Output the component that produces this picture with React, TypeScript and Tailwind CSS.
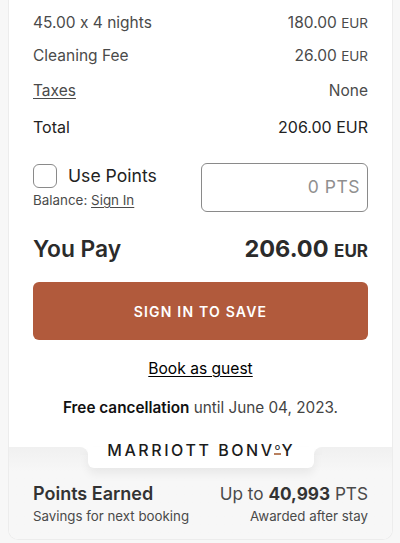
export default function App() {
  const row = "flex justify-between items-baseline";
  const corner = "absolute top-0 w-2 h-2 bg-white";
  return (
    <div className="w-[400px] h-[543px] overflow-hidden bg-[#f7f7f7] pl-2 pr-[7px] font-['Inter',sans-serif] text-[#333] [font-feature-settings:'calt'_0]">
      <div className="h-[540px] bg-white rounded-b-[10px] border-x border-b border-[#ececec] flex flex-col overflow-hidden">
        <div className="px-6 flex flex-col h-[447px]">
          <div className={`${row} mt-[13px] text-[15.5px] leading-5 text-[#4a4a4a]`}>
            <span>45.00 x 4 nights</span>
            <span>180.00 <span className="text-[13.5px]">EUR</span></span>
          </div>
          <div className={`${row} mt-[13px] text-[15.5px] leading-5 text-[#4a4a4a]`}>
            <span>Cleaning Fee</span>
            <span>26.00 <span className="text-[13.5px]">EUR</span></span>
          </div>
          <div className={`${row} mt-[15px] text-[15.5px] leading-5 text-[#4a4a4a]`}>
            <span className="underline underline-offset-2">Taxes</span>
            <span>None</span>
          </div>
          <div className={`${row} mt-[16px] text-[16px] leading-5 text-[#222]`}>
            <span>Total</span>
            <span>206.00 EUR</span>
          </div>
          <div className="flex justify-between mt-[26px]">
            <div className="flex flex-col">
              <div className="flex items-center gap-[11px]">
                <div className="w-6 h-6 rounded-[6px] border border-[#8a8a8a] bg-white" />
                <span className="text-[17.6px] text-[#222]">Use Points</span>
              </div>
              <div className="mt-[1px] text-[13.4px] leading-5 text-[#4a4a4a]">
                Balance: <span className="underline underline-offset-2">Sign In</span>
              </div>
            </div>
            <div className="w-[167px] h-[49px] rounded-[6px] border border-[#8a8a8a] flex items-center justify-end pr-[7px] text-[17.5px] text-[#8f8f8f]">
              <span className="tracking-[0.5px]">0 PTS</span>
            </div>
          </div>
          <div className={`${row} mt-[23px]`}>
            <span className="text-[22.8px] leading-7 font-semibold text-[#2b2b2b]">You Pay</span>
            <span className="text-[23.5px] leading-7 font-bold text-[#2b2b2b]">206.00 <span className="text-[17px]">EUR</span></span>
          </div>
          <button className="mt-[17px] h-[58px] shrink-0 rounded-[6px] bg-[#b15a3c] text-white text-[14px] font-semibold tracking-[1.2px]">
            SIGN IN TO SAVE
          </button>
          <div className="mt-[19px] text-center text-[15.6px] leading-5 text-black underline underline-offset-2">Book as guest</div>
          <div className="mt-[19px] text-center text-[15.3px] leading-5 text-[#444] whitespace-nowrap">
            <span className="font-semibold text-[#111]">Free cancellation</span> until June 04, 2023.
          </div>
        </div>
        <div className="relative flex-1 bg-gradient-to-b from-[#f0f0f0] to-[#f7f7f7] to-[24px] px-6">
          <div className={`${corner} left-[71px]`}><div className="w-2 h-2 bg-[#f0f0f0] rounded-tr-[8px]" /></div>
          <div className={`${corner} left-[305px]`}><div className="w-2 h-2 bg-[#f0f0f0] rounded-tl-[8px]" /></div>
          <div className="absolute left-[79px] top-0 w-[226px] h-[21px] bg-white rounded-b-[6px] shadow-[0_6px_10px_rgba(0,0,0,0.06)]" />
          <div className="absolute left-[78px] top-[-13px] w-[226px] h-[31px] flex items-center justify-center text-[16px] font-medium tracking-[2.55px] text-[#1c1c1c] whitespace-nowrap">
            <span>MARRIOTT BONV</span>
            <span className="relative text-[9px] leading-none -top-[3px] tracking-normal mr-[1.5px]">o
              <span className="absolute left-[-1px] right-[-1px] top-[11px] h-[1.5px] bg-[#b9805f]" />
            </span>
            <span className="tracking-normal">Y</span>
          </div>
          <div className="flex justify-between mt-[35px] items-baseline">
            <span className="text-[18px] leading-6 font-semibold text-[#333]">Points Earned</span>
            <span className="text-[17.2px] leading-6 text-[#4a4a4a]">Up to <b className="font-bold text-[#333]">40,993</b> PTS</span>
          </div>
          <div className="flex justify-between mt-[0px] text-[13.3px] leading-5 text-[#4a4a4a]">
            <span>Savings for next booking</span>
            <span>Awarded after stay</span>
          </div>
        </div>
      </div>
    </div>
  );
}
